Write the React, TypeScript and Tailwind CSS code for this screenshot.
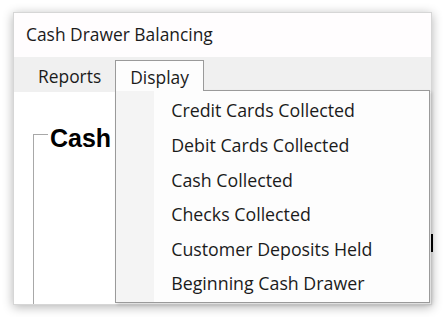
import React from "react";

const items = [
  "Credit Cards Collected",
  "Debit Cards Collected",
  "Cash Collected",
  "Checks Collected",
  "Customer Deposits Held",
  "Beginning Cash Drawer",
];

export default function App() {
  return (
    <div
      className="w-[446px] h-[317px] bg-white overflow-hidden pt-[12px] pl-[13px]"
      style={{ fontFamily: '"Open Sans", "Noto Sans", sans-serif' }}
    >
      <div className="relative w-[419px] h-[293px] bg-white border border-[#d6d6d6] shadow-[0_2px_10px_rgba(0,0,0,0.3)] flex flex-col">
        {/* Title bar */}
        <div className="h-[44px] flex items-center pl-[12px] pb-[1px] text-[17.4px] text-[#1b1b1b] bg-[#fffdfe]">
          Cash Drawer Balancing
        </div>

        {/* Menu bar */}
        <div className="h-[35px] bg-[#f0f0f0] flex items-start pt-[3px] text-[17.4px] text-[#1b1b1b]">
          <div className="h-[31px] flex items-center pl-[24px] pr-[14px] pt-[2px]">Reports</div>
          <div className="relative">
            <div className="h-[31px] w-[89px] flex items-center pl-[14px] pt-[2px] bg-[#fdfdfd] border border-b-0 border-[#9a9a9a] relative z-20">
              Display
            </div>
            {/* Dropdown */}
            <div className="absolute left-0 top-[30px] z-10 w-[315px] h-[213px] bg-[#fdfdfd] border border-[#9a9a9a] flex shadow-[2px_2px_3px_rgba(0,0,0,0.15)]">
              <div className="w-[38px] bg-[#f4f4f4]" />
              <div className="flex-1 pt-[2.5px] pl-[17px]">
                {items.map((it) => (
                  <div key={it} className="h-[34.6px] flex items-center text-[17.8px] text-[#1b1b1b]">
                    {it}
                  </div>
                ))}
              </div>
            </div>
          </div>
        </div>

        {/* Content */}
        <div className="flex-1 relative bg-white pl-[19px] pt-[42px]">
          <div className="h-full border-l border-t border-[#a8a8a8] w-[60px] relative">
            <div
              className="absolute left-[14px] top-[-9px] bg-white px-[2px] text-[25px] font-bold leading-none text-black"
              style={{ fontFamily: '"Liberation Sans", Arial, sans-serif' }}
            >
              Cash
            </div>
          </div>
          <div className="absolute right-[-2px] top-[142px] w-[2px] h-[18px] bg-black" />
        </div>
      </div>
    </div>
  );
}
